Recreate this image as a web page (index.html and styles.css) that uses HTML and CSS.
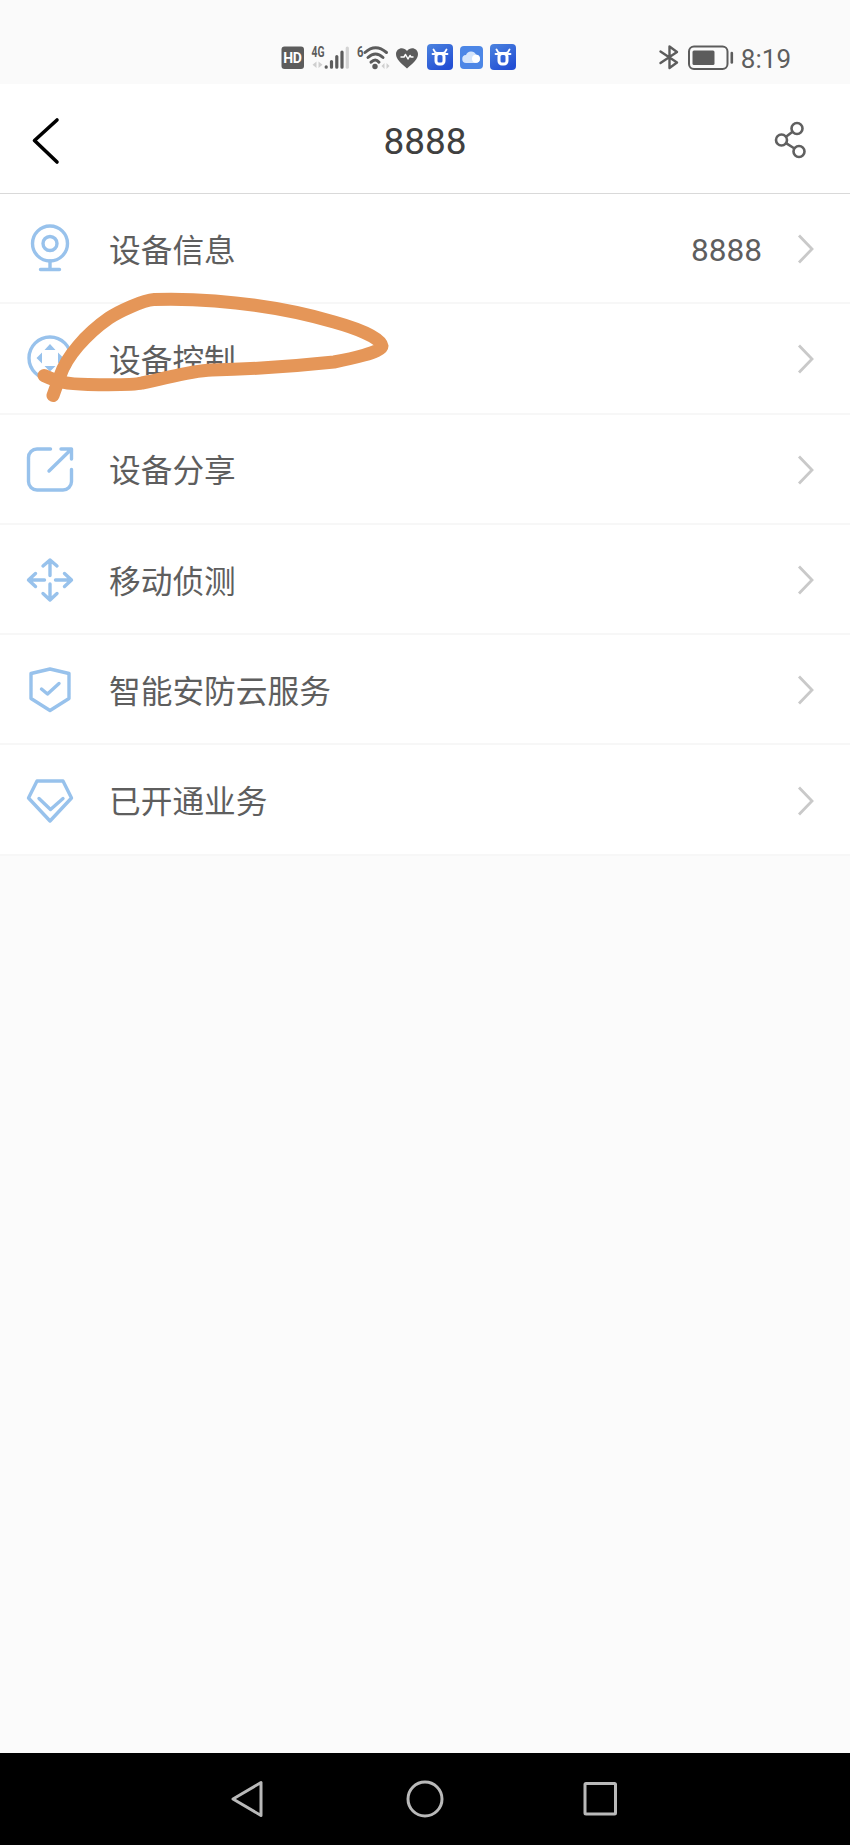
FILE: index.html
```html
<!DOCTYPE html>
<html lang="zh-CN">

<head>
    <meta charset="UTF-8">
    <meta name="viewport" content="width=device-width, initial-scale=1.0">
    <title>8888</title>
    <link rel="stylesheet" href="styles.css">
</head>

<body>
    <div class="screen">
        <!-- Status bar -->
        <div class="status-bar">
            <div class="status-icons">
                <svg class="icon-hd" width="23" height="26" viewBox="0 0 23 26">
                    <rect x="0.5" y="2.5" width="22.500" height="22.500" rx="3" fill="#5c5c5c" />
                    <text x="11.500" y="18.500" text-anchor="middle" textLength="18.500" font-size="14" font-weight="700" fill="#fff">HD</text>
                </svg>
                <svg class="icon-signal" width="39" height="26" viewBox="0 0 39 26">
                    <text x="0.500" y="12.500" textLength="13" lengthAdjust="spacingAndGlyphs" font-size="14" font-weight="700" fill="#5c5c5c">4G</text>
                    <path d="M5.500 17.500v6.500l-4-3.200zM7.500 17.500v6.500l4-3.200z" fill="#cfcfcf" />
                    <path d="M15.200 23.200v-.4M20.500 23.200V17.500M25.800 23.200V12.500M31 23.200V8" stroke="#5c5c5c" stroke-width="3.200" stroke-linecap="round" />
                    <path d="M36.300 23.200V4" stroke="#d3d3d3" stroke-width="3.200" stroke-linecap="round" />
                </svg>
                <svg class="icon-wifi" width="34" height="26" viewBox="0 0 34 26">
                    <text x="0" y="12.500" textLength="6.500" lengthAdjust="spacingAndGlyphs" font-size="14" font-weight="700" fill="#5c5c5c">6</text>
                    <path d="M8 8.500Q18.500-1 29.500 8.500M11 13.500Q18.500 6.500 26 13.500M14 18.200Q18.500 14 22 18.200" fill="none" stroke="#5c5c5c" stroke-width="3" stroke-linecap="round" />
                    <circle cx="18" cy="22.500" r="2.700" fill="#5c5c5c" />
                    <path d="M27.500 19v6l-3-3zM29.500 19v6l3-3z" fill="#cfcfcf" />
                </svg>
                <svg class="icon-heart" width="24" height="26" viewBox="0 0 24 26">
                    <path d="M12 24.500C6 19 1 15.500 1 10C1 4 8.500 2 12 7C15.500 2 23 4 23 10C23 15.500 18 19 12 24.500Z" fill="#5c5c5c" />
                    <path d="M5.500 13H9L10.500 10.500L13 15L15 11.500L16 13H18.500" fill="none" stroke="#fff" stroke-width="1.500" stroke-linejoin="round" />
                </svg>
                <svg class="icon-app" width="26" height="26" viewBox="0 0 26 26">
                    <defs>
                        <linearGradient id="appBlue" x1="0" y1="0" x2="0.600" y2="1">
                            <stop offset="0" stop-color="#4c84df" />
                            <stop offset="1" stop-color="#234fd4" />
                        </linearGradient>
                    </defs>
                    <rect width="26" height="26" rx="4" fill="url(#appBlue)" />
                    <path d="M6.500 5.500L8 8L10 9H16L18 8L19.500 5.500M5.500 10H8M20.500 10H18" fill="none" stroke="#fff" stroke-width="1.800" stroke-linecap="round" />
                    <rect x="9" y="9.500" width="8" height="10.500" rx="3" fill="none" stroke="#fff" stroke-width="3" />
                </svg>
                <svg class="icon-cloud" width="23" height="26" viewBox="0 0 23 26">
                    <rect y="2" width="23" height="23" rx="4" fill="#4c86e6" />
                    <path d="M6.500 19a4 4 0 0 1-.5-8a5.500 5.500 0 0 1 10-.5a4.300 4.300 0 0 1 0 8.500z" fill="#d5e5fb" />
                    <circle cx="16" cy="14.800" r="4" fill="#fff" />
                </svg>
                <svg class="icon-app" width="26" height="26" viewBox="0 0 26 26">
                    <rect width="26" height="26" rx="4" fill="url(#appBlue)" />
                    <path d="M6.500 5.500L8 8L10 9H16L18 8L19.500 5.500M5.500 10H8M20.500 10H18" fill="none" stroke="#fff" stroke-width="1.800" stroke-linecap="round" />
                    <rect x="9" y="9.500" width="8" height="10.500" rx="3" fill="none" stroke="#fff" stroke-width="3" />
                </svg>
            </div>
            <div class="status-right">
                <svg class="icon-bluetooth" width="20" height="26" viewBox="0 0 20 26">
                    <path d="M1.500 7.500L18 18.500L10.500 24V2.500L18 8L1.500 19" fill="none" stroke="#5c5c5c" stroke-width="2.400" stroke-linecap="round" stroke-linejoin="round" />
                </svg>
                <svg class="icon-battery" width="46" height="26" viewBox="0 0 46 26">
                    <rect x="1" y="2.500" width="38.500" height="22.500" rx="5" fill="none" stroke="#5c5c5c" stroke-width="2" />
                    <rect x="4.500" y="6.500" width="22" height="14.500" rx="1.500" fill="#5c5c5c" />
                    <path d="M43.800 9v9.500" stroke="#5c5c5c" stroke-width="2.600" stroke-linecap="round" />
                </svg>
                <span class="time">8:19</span>
            </div>
        </div>

        <!-- Title bar -->
        <header class="title-bar">
            <svg width="32" height="50" viewBox="0 0 32 50">
                <path d="M28 5L5.500 25.500L28 47" fill="none" stroke="#000" stroke-width="3.600" stroke-linecap="round" stroke-linejoin="round" />
            </svg>
            <h1 class="title">8888</h1>
            <svg width="32" height="38" viewBox="0 0 32 38">
                <g fill="none" stroke="#606060" stroke-width="2.600">
                    <circle cx="22" cy="7.500" r="5.500" />
                    <circle cx="6.500" cy="19" r="5.500" />
                    <circle cx="24" cy="30.500" r="5.500" />
                    <path d="M11 15.700L17.500 10.800M11 22.200L19.500 27.500" />
                </g>
            </svg>
        </header>

        <!-- Menu -->
        <ul class="menu">
            <li class="menu-item">
                <svg class="menu-icon" viewBox="0 0 50 50">
                    <circle cx="25" cy="19.500" r="17.500" />
                    <circle cx="25" cy="19.500" r="7" />
                    <path d="M25 37V45M15.500 45.500H34.500" />
                </svg>
                <span class="label">设备信息</span>
                <span class="value">8888</span>
                <svg class="chevron" viewBox="0 0 16 30"><path d="M1 1.500L14 15L1 28.500" /></svg>
            </li>
            <li class="menu-item">
                <svg class="menu-icon" viewBox="0 0 50 50">
                    <circle cx="25" cy="24" r="21" />
                    <path class="solid" d="M25 10L30.500 16H19.500ZM25 37.500L30.500 32H19.500ZM11.500 24L17 18.500V29.500ZM38.500 24L33 18.500V29.500Z" />
                </svg>
                <span class="label">设备控制</span>
                <svg class="chevron" viewBox="0 0 16 30"><path d="M1 1.500L14 15L1 28.500" /></svg>
            </li>
            <li class="menu-item">
                <svg class="menu-icon" viewBox="0 0 50 50">
                    <path d="M25.500 4H12A8.500 8.500 0 0 0 3.500 12.500V36.500A8.500 8.500 0 0 0 12 45H38A8.500 8.500 0 0 0 46.500 36.500V24.500M36 4H46.500V14M46 4.500L24 26" />
                </svg>
                <span class="label">设备分享</span>
                <svg class="chevron" viewBox="0 0 16 30"><path d="M1 1.500L14 15L1 28.500" /></svg>
            </li>
            <li class="menu-item">
                <svg class="menu-icon" viewBox="0 0 50 50">
                    <path d="M25 20.500V5M18 11L25 5L32 11M25 29V45M18 38.500L25 45L32 38.500M19.500 25H3.500M10.500 18.500L3.500 25L10.500 31.500M30.500 25H46.500M39.500 18.500L46.500 25L39.500 31.500" />
                </svg>
                <span class="label">移动侦测</span>
                <svg class="chevron" viewBox="0 0 16 30"><path d="M1 1.500L14 15L1 28.500" /></svg>
            </li>
            <li class="menu-item">
                <svg class="menu-icon" viewBox="0 0 50 50">
                    <path d="M25 4L44 8.500V33.500L25 45.500L6 33.500V8.500ZM16.500 24L22.500 29L34 18.500" />
                </svg>
                <span class="label">智能安防云服务</span>
                <svg class="chevron" viewBox="0 0 16 30"><path d="M1 1.500L14 15L1 28.500" /></svg>
            </li>
            <li class="menu-item">
                <svg class="menu-icon" viewBox="0 0 50 50">
                    <path d="M12 5H38L46.500 22L25 45L3.500 22ZM14 22.500L25.500 33.500L38 22.500" />
                </svg>
                <span class="label">已开通业务</span>
                <svg class="chevron" viewBox="0 0 16 30"><path d="M1 1.500L14 15L1 28.500" /></svg>
            </li>
        </ul>

        <!-- Hand-drawn circle over the second item -->
        <svg class="marker" viewBox="30 285 370 125">
            <path d="M44 375.500C58 382 66 384 88 384.500C116 385 134 385 142 383C168 378 188 371 212 370C260 369 306 365 334 362C350 359 382 352 382 346C381 337 352 327 334 322C290 309 254 304 215 301C190 299 170 299 154 299.500C143 300 118 312 109 318C86 334 66 357 60 376L53 395.500" />
        </svg>

        <!-- System navigation -->
        <nav class="nav-bar">
            <svg width="40" height="40" viewBox="0 0 40 40"><path d="M3 20L31 3.500V36.500Z" /></svg>
            <svg width="40" height="40" viewBox="0 0 40 40"><circle cx="20" cy="20" r="17" /></svg>
            <svg width="40" height="40" viewBox="0 0 40 40"><rect x="5" y="4.500" width="30.500" height="30.500" rx="1" /></svg>
        </nav>
    </div>
</body>

</html>
```
FILE: styles.css
```css
* {
    margin: 0;
    padding: 0;
    box-sizing: border-box;
}

body {
    font-family: Roboto, "Noto Sans CJK SC", sans-serif;
    background-color: #fbfbfb;
    color: #5e5e5e;
}

svg {
    display: block;
    flex-shrink: 0;
    overflow: visible;
}

.screen {
    position: relative;
    display: flex;
    flex-direction: column;
    width: 850px;
    height: 1845px;
    overflow: hidden;
}

/* Status bar */
.status-bar {
    display: flex;
    justify-content: space-between;
    height: 84px;
    padding: 44px 59px 0 281px;
    background-color: #fafafa;
}

.status-icons,
.status-right {
    display: flex;
    height: 26px;
}

.status-icons {
    gap: 7.3px;
}

.icon-wifi {
    margin-right: -2.5px;
}

.icon-signal {
    margin-right: -1px;
}

.status-right {
    align-items: center;
    gap: 9px;
}

.icon-bluetooth,
.icon-battery {
    position: relative;
    left: -1px;
}

.time {
    margin-left: -3px;
    padding-top: 3px;
    font-size: 26px;
    line-height: 26px;
}

/* Title bar */
.title-bar {
    display: flex;
    justify-content: space-between;
    align-items: center;
    height: 110px;
    padding: 2px 43px 0 29px;
    background-color: #fff;
    border-bottom: 1.5px solid #d9d9d9;
}

.title {
    padding: 4px 0 0 14px;
    font-size: 37px;
    font-weight: 400;
    color: #404040;
}

/* Menu */
.menu {
    list-style: none;
    background-color: #fff;
}

.menu-item {
    display: flex;
    align-items: center;
    height: 110.3px;
    padding: 2px 36px 0 25px;
    border-bottom: 2px solid #f7f7f7;
}

.menu-icon {
    width: 50px;
    height: 50px;
    margin-right: 34px;
    fill: none;
    stroke: #98c2ec;
    stroke-width: 3.4;
    stroke-linecap: round;
    stroke-linejoin: round;
}

.menu-icon .solid {
    fill: #98c2ec;
    stroke: none;
}

.label {
    margin-right: auto;
    padding-top: 5px;
    font-size: 31.7px;
    line-height: 46px;
}

.value {
    padding-top: 2px;
    font-size: 31.6px;
}

.chevron {
    width: 16px;
    height: 30px;
    margin-left: 36px;
    fill: none;
    stroke: #c9c9c9;
    stroke-width: 2.8;
}

/* Orange pen stroke */
.marker {
    position: absolute;
    top: 285px;
    left: 30px;
    width: 370px;
    height: 125px;
    fill: none;
    stroke: #e59658;
    stroke-width: 13;
    stroke-linecap: round;
    stroke-linejoin: round;
}

/* System navigation */
.nav-bar {
    display: flex;
    justify-content: center;
    gap: 135px;
    height: 92px;
    margin-top: auto;
    padding-top: 26px;
    background-color: #000;
}

.nav-bar svg {
    fill: none;
    stroke: #b9b9b9;
    stroke-width: 3;
    stroke-linejoin: round;
}
```
